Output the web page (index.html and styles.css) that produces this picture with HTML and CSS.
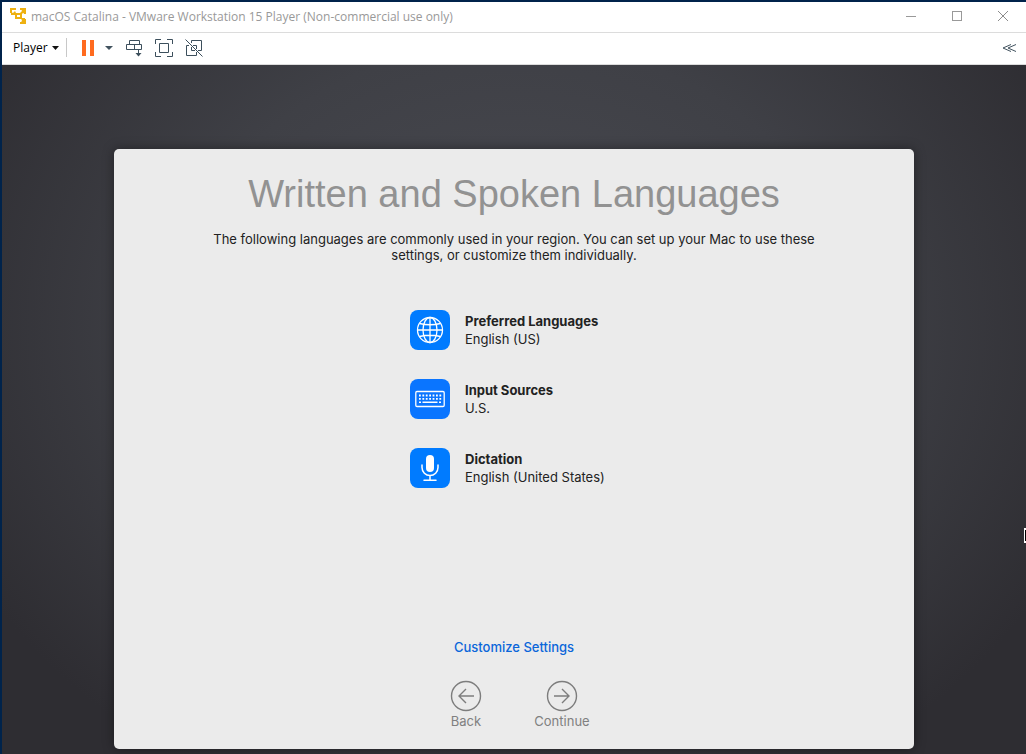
FILE: index.html
```html
<!DOCTYPE html>
<html lang="en">
<head>
<meta charset="utf-8">
<meta name="viewport" content="width=device-width, initial-scale=1">
<title>macOS Catalina - VMware Workstation 15 Player</title>
<link rel="stylesheet" href="styles.css">
</head>
<body>
<div class="window">
  <header class="titlebar">
    <svg class="app-icon" width="16" height="16" viewBox="0 0 16 16" fill="none" stroke="#eeb111" stroke-width="2" aria-hidden="true">
      <path d="M1 5V1H6M10 1H15V6M10 15H15V11M6 6H11V10H6V6"/>
      <path d="M1 7V4L3 5L5 3L7 7ZM10 5L12 3L11 1H15V6L13 5L11 7ZM10 10L12 12L11 15H15V10Z" fill="#eeb111" stroke="none"/>
    </svg>
    <span class="caption">macOS Catalina - VMware Workstation 15 Player (Non-commercial use only)</span>
    <div class="window-controls">
      <button class="window-button" aria-label="Minimize"><svg width="12" height="12" viewBox="0 0 12 12" fill="none" stroke="#999" shape-rendering="crispEdges"><path d="M1 6.500H11"/></svg></button>
      <button class="window-button" aria-label="Maximize"><svg width="12" height="12" viewBox="0 0 12 12" fill="none" stroke="#999" shape-rendering="crispEdges"><path d="M1.500 1.500H10.500V10.500H1.500Z"/></svg></button>
      <button class="window-button" aria-label="Close"><svg width="12" height="12" viewBox="0 0 12 12" fill="none" stroke="#8c8c8c"><path d="M1 1L11 11M11 1L1 11"/></svg></button>
    </div>
  </header>

  <nav class="toolbar">
    <button class="player-menu">Player <svg width="7" height="4" viewBox="0 0 7 4"><path d="M0 0H7L3.500 4Z" fill="#111"/></svg></button>
    <span class="divider"></span>
    <button class="tool tool-pause" aria-label="Suspend"><svg width="12" height="16" viewBox="0 0 12 16" fill="#ff6b1f"><path d="M0 0H4V16H0ZM8 0H12V16H8Z"/></svg></button>
    <button class="tool tool-arrow" aria-label="Power options"><svg width="8" height="4" viewBox="0 0 8 4"><path d="M0 0H8L4 4Z" fill="#42535f"/></svg></button>
    <button class="tool" aria-label="Send Ctrl+Alt+Del"><svg width="18" height="18" viewBox="0 0 18 18" fill="none" stroke="#3c4f5c"><path d="M4.500 5.500V1.500H14.500V5.500M1.500 5.500H16.500V10.500H1.500ZM9.500 5.500V10.500M13.500 10.500V15"/><path d="M10.500 14H16.500L13.500 17.500Z" fill="#3c4f5c" stroke="none"/></svg></button>
    <button class="tool" aria-label="Full screen"><svg width="18" height="18" viewBox="0 0 18 18" fill="none" stroke="#3c4f5c"><path d="M.5 5V.5H6M12 .5H17.500V5M17.500 13V17.500H12M6 17.500H.5V13M4.500 4.500H13.500V13.500H4.500Z"/></svg></button>
    <button class="tool" aria-label="Unity mode"><svg width="18" height="18" viewBox="0 0 18 18" fill="none" stroke="#3c4f5c"><path d="M6.500 4V1.500H16.500V11.500H13M4 6.500H1.500V16.500H11.500V13M8 6.500H11.500V10M6.500 8V11.500H10M.5 .5L17.500 17.500"/></svg></button>
    <button class="tool tool-collapse" aria-label="Hide toolbar"><svg width="15" height="8" viewBox="0 0 15 8" fill="none" stroke="#42535f"><path d="M9 .5L1 4L9 7.500M14 .5L6 4L14 7.500"/></svg></button>
  </nav>

  <main class="desktop">
    <section class="assistant">
      <h1 class="heading">Written and Spoken Languages</h1>
      <p class="intro">The following languages are commonly used in your region. You can set up your Mac to use these settings, or customize them individually.</p>
      <ul class="settings">
        <li class="setting">
          <svg class="tile" width="40" height="40" viewBox="0 0 40 40" fill="none" stroke="#fff" stroke-width="1.300" aria-hidden="true"><rect width="40" height="40" rx="8" fill="#007bff" stroke="none"/><circle cx="20" cy="20" r="12.500"/><ellipse cx="20" cy="20" rx="7" ry="12.500"/><path d="M20 7.500V32.500M7.500 20H32.500M9.500 13.500Q20 16 30.500 13.500M9.500 26.500Q20 24 30.500 26.500"/></svg>
          <div><h2 class="label">Preferred Languages</h2><p class="value">English (US)</p></div>
        </li>
        <li class="setting">
          <svg class="tile" width="40" height="40" viewBox="0 0 40 40" fill="none" stroke="#fff" aria-hidden="true"><rect width="40" height="40" rx="8" fill="#0a75ff" stroke="none"/><rect x="5.800" y="12.500" width="28.400" height="15" rx="1.200" stroke-width="1.300"/><path d="M9 16.500H31.500M9 19.800H31.500" stroke-width="1.800" stroke-dasharray="1.800 1.600"/><path d="M9 23.300H11M12.500 23.300H27.500M29 23.300H31" stroke-width="1.600"/></svg>
          <div><h2 class="label">Input Sources</h2><p class="value">U.S.</p></div>
        </li>
        <li class="setting">
          <svg class="tile" width="40" height="40" viewBox="0 0 40 40" fill="none" stroke="#fff" stroke-width="1.500" stroke-linecap="round" aria-hidden="true"><rect width="40" height="40" rx="8" fill="#007bff" stroke="none"/><rect x="16" y="7" width="8" height="17" rx="4" fill="#fff" stroke="none"/><path d="M12 17V19.500A8 8 0 0 0 28 19.500V17M20 27.500V32M14 32.300H26"/></svg>
          <div><h2 class="label">Dictation</h2><p class="value">English (United States)</p></div>
        </li>
      </ul>
      <a class="customize" href="#">Customize Settings</a>
      <div class="actions">
        <button class="action"><svg width="32" height="32" viewBox="0 0 32 32" fill="none" stroke="#7d7d7d" stroke-width="1.400" aria-hidden="true"><circle cx="16" cy="16" r="14.500"/><path d="M24 16H9.500M16 9L9 16L16 23"/></svg>Back</button>
        <button class="action"><svg width="32" height="32" viewBox="0 0 32 32" fill="none" stroke="#7d7d7d" stroke-width="1.400" aria-hidden="true"><circle cx="16" cy="16" r="14.500"/><path d="M8 16H22.500M16 9L23 16L16 23"/></svg>Continue</button>
      </div>
    </section>
    <svg class="pointer" width="2" height="15" viewBox="0 0 2 15" aria-hidden="true"><path d="M0 0H2V15H0Z" fill="#fff"/><path d="M1 2H2V13H1Z" fill="#000"/></svg>
  </main>
</div>
</body>
</html>
```
FILE: styles.css
```css
* { box-sizing: border-box; }
body { margin: 0; }
h1, h2, p, ul { margin: 0; padding: 0; }
button {
  margin: 0;
  padding: 0;
  border: 0;
  background: none;
  color: inherit;
  font: inherit;
}
svg { display: block; flex: none; }

.window {
  display: flex;
  flex-direction: column;
  min-height: 100vh;
  border-top: 2px solid #00234b;
  border-left: 2px solid #00234b;
  background: #fff;
  font-family: "Open Sans", "Noto Sans", sans-serif;
  font-size: 12px;
}
.titlebar {
  display: flex;
  align-items: center;
  height: 30px;
  padding: 0 0 2px 8px;
  color: #999;
}
.caption { margin-left: 5px; white-space: nowrap; }
.window-controls { display: flex; margin-left: auto; }
.window-button {
  display: grid;
  place-items: center;
  width: 46px;
  height: 28px;
}
.toolbar {
  display: flex;
  align-items: center;
  height: 33px;
  padding: 0 9px 2px 11px;
  border-top: 1px solid #dcdcdc;
  border-bottom: 1px solid #dcdcdc;
  color: #000;
}
.player-menu { display: flex; align-items: center; gap: 4px; }
.divider { width: 1px; height: 19px; margin: 0 15px 0 7px; background: #c8c8c8; }
.tool { margin-right: 12px; }
.tool-pause { margin-right: 11px; }
.tool-collapse { margin: 0 0 0 auto; }

.desktop {
  position: relative;
  flex: 1;
  padding: 84px 24px 5px;
  background: radial-gradient(ellipse 60% 75% at 50% 38%, #4a4b52 0%, #3f4046 55%, #2e2d32 100%);
  font-family: Inter, sans-serif;
  font-size: 13px;
}
.assistant {
  display: flex;
  flex-direction: column;
  align-items: center;
  max-width: 800px;
  min-height: 600px;
  margin: 0 auto;
  padding: 20px 24px;
  border-radius: 5px;
  background: #ebebeb;
  box-shadow: 0 0 12px rgba(0, 0, 0, 0.4);
  color: #222;
}
.heading {
  color: #929292;
  font-family: "Liberation Sans", Arial, sans-serif;
  font-size: 38px;
  font-weight: 400;
  line-height: 50px;
  text-align: center;
}
.intro {
  max-width: 620px;
  margin-top: 12px;
  line-height: 16px;
  text-align: center;
}
.settings {
  display: grid;
  gap: 29px;
  width: 208px;
  margin-top: 47px;
  list-style: none;
}
.setting { display: flex; gap: 15px; align-items: center; white-space: nowrap; }
.label { font-size: 13px; font-weight: 700; line-height: 18px; }
.value { line-height: 18px; }
.customize {
  margin-top: auto;
  color: #0a66da;
  font-weight: 500;
  line-height: 16px;
  text-decoration: none;
}
.actions { display: grid; grid-template-columns: 96px 96px; margin-top: 25px; }
.action {
  display: flex;
  flex-direction: column;
  align-items: center;
  gap: 1px;
  color: #808080;
  line-height: 16px;
}
.pointer { position: absolute; top: 463px; right: 0; }
```
